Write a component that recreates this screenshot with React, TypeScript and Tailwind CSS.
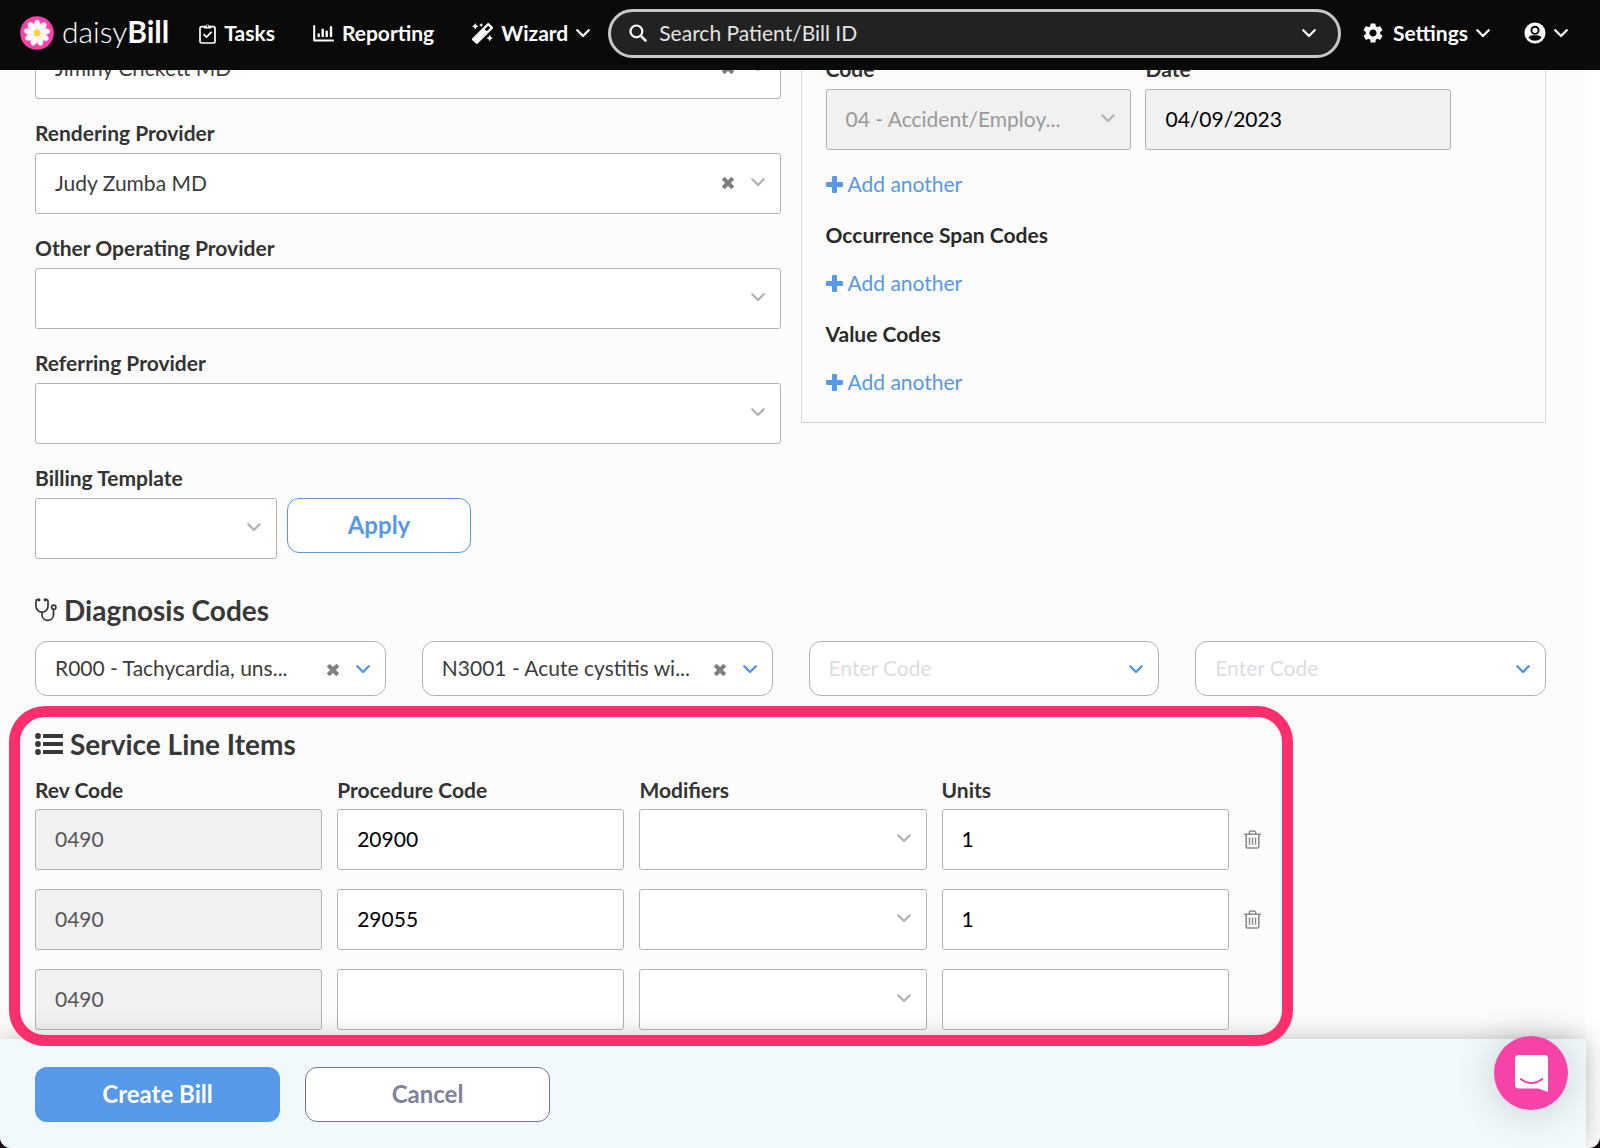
import { useId } from "react";
import type { ReactNode } from "react";
import { clsx } from "clsx";
import { FaMagic } from "react-icons/fa";
import { MdSettings } from "react-icons/md";

const providers = [
  { label: "Rendering Provider", value: "Judy Zumba MD" },
  { label: "Other Operating Provider", value: "" },
  { label: "Referring Provider", value: "" },
];

const diagnosisCodes = [
  "R000 - Tachycardia, uns...",
  "N3001 - Acute cystitis wi...",
  "",
  "",
];

const lineItems = [
  { rev: "0490", procedure: "20900", units: "1", removable: true },
  { rev: "0490", procedure: "29055", units: "1", removable: true },
  { rev: "0490", procedure: "", units: "", removable: false },
];

function Chevron({ className }: { className?: string }) {
  return (
    <svg viewBox="0 0 14 9" fill="none" className={clsx("w-3.5", className)}>
      <path
        d="M1.3 1.3 7 7l5.7-5.7"
        stroke="currentColor"
        strokeWidth="2.3"
        strokeLinecap="round"
        strokeLinejoin="round"
      />
    </svg>
  );
}

function DaisyLogo() {
  return (
    <svg viewBox="0 0 34 34" className="size-[34px]">
      <circle cx="17" cy="17" r="16.8" fill="#f743a8" />
      {[0, 40, 80, 120, 160, 200, 240, 280, 320].map((angle) => (
        <path
          key={angle}
          d="M17 17C13 13 12.8 5 17 3.8c4.6.6 3.8 9.2 0 13.2Z"
          fill="#fff"
          stroke="#fbc3e2"
          strokeWidth="0.5"
          transform={`rotate(${angle} 17 17)`}
        />
      ))}
      <circle cx="17" cy="17" r="3.2" fill="#ffd21f" />
    </svg>
  );
}

function ClipboardIcon() {
  return (
    <svg viewBox="0 0 17 21" fill="none" className="w-[17px]">
      <rect x="1" y="3.6" width="15" height="16.4" rx="1.8" stroke="currentColor" strokeWidth="1.7" />
      <path d="M4.8 5.6V3.5h1.7a2 2 0 0 1 4 0h1.7v2.1Z" fill="currentColor" />
      <circle cx="8.5" cy="3" r="0.9" fill="#0a0a0a" />
      <path d="m5 11.6 2.5 2.5 4.6-4.7" stroke="currentColor" strokeWidth="1.7" strokeLinecap="round" />
    </svg>
  );
}

function ChartIcon() {
  return (
    <svg viewBox="0 0 21 17" fill="none" className="w-[21px]">
      <path d="M1.2 1v14.5H20" stroke="currentColor" strokeWidth="2" strokeLinecap="round" strokeLinejoin="round" />
      <path
        d="M5.7 9.4v1.6M9.7 4.8V11M13.7 6.6V11M18 2.2V11"
        stroke="currentColor"
        strokeWidth="2.4"
        strokeLinecap="round"
      />
    </svg>
  );
}

function SearchIcon() {
  return (
    <svg viewBox="0 0 18 18" fill="none" className="w-[18px]">
      <circle cx="7.4" cy="7.4" r="5.9" stroke="currentColor" strokeWidth="2.2" />
      <path d="m11.8 11.8 4.7 4.7" stroke="currentColor" strokeWidth="2.6" strokeLinecap="round" />
    </svg>
  );
}

function UserIcon() {
  return (
    <svg viewBox="0 0 22 22" className="w-[22px]">
      <circle cx="11" cy="11" r="10.5" fill="#fff" />
      <circle cx="11" cy="8.3" r="3.6" fill="#fff" stroke="#0a0a0a" strokeWidth="1.9" />
      <path
        d="M4.4 15.2c1.5-1.7 3.3-1.9 6.6-1.9s5.1.2 6.600 1.900c-1.500 2.300-3.800 3.600-6.600 3.600s-5.100-1.300-6.600-3.600Z"
        fill="#0a0a0a"
      />
    </svg>
  );
}

function StethoscopeIcon() {
  return (
    <svg viewBox="0 0 22 24" fill="none" className="w-[22px]">
      <path
        d="M4 1.6H2.5C1.5 1.6 1 2.2 1 3.2V8c0 3.4 2.6 6.2 6 6.2S13 11.4 13 8V3.2c0-1-.5-1.6-1.5-1.6H10"
        stroke="currentColor"
        strokeWidth="1.7"
      />
      <path d="M7 14.2v2.3c0 3.4 2.3 5.9 5.7 5.9s5.8-2.5 5.8-5.900v-5" stroke="currentColor" strokeWidth="1.7" />
      <circle cx="18.8" cy="9.3" r="2.1" stroke="currentColor" strokeWidth="1.7" />
      <circle cx="3.9" cy="1.8" r="1.6" fill="currentColor" />
      <circle cx="10.2" cy="1.8" r="1.6" fill="currentColor" />
    </svg>
  );
}

function ListIcon() {
  return (
    <svg viewBox="0 0 28 22" fill="currentColor" className="w-7">
      {[3, 11, 19].map((y) => (
        <g key={y}>
          <circle cx="3" cy={y} r="2.9" />
          <rect x="8" y={y - 2} width="20" height="4" rx="0.6" />
        </g>
      ))}
    </svg>
  );
}

function PlusIcon({ className }: { className?: string }) {
  return (
    <svg viewBox="0 0 17 17" fill="currentColor" className={className}>
      <path d="M7 0h3a1 1 0 0 1 1 1v5h5a1 1 0 0 1 1 1v3a1 1 0 0 1-1 1h-5v5a1 1 0 0 1-1 1H7a1 1 0 0 1-1-1v-5H1a1 1 0 0 1-1-1V7a1 1 0 0 1 1-1h5V1a1 1 0 0 1 1-1Z" />
    </svg>
  );
}

function TrashIcon() {
  return (
    <svg viewBox="0 0 17 19" fill="none" stroke="currentColor" className="w-[17px]">
      <path d="M0 4.2h17" strokeWidth="1.5" />
      <path d="M5.3 4V2.6C5.3 1.5 6 .9 7 .9h3c1 0 1.7.6 1.7 1.7V4" strokeWidth="1.5" />
      <path d="M2.2 4.2v12.4c0 .9.5 1.4 1.4 1.4h9.8c.9 0 1.4-.5 1.4-1.4V4.2" strokeWidth="1.6" />
      <path d="M5.5 7.5v7.3M8.5 7.5v7.3M11.5 7.5v7.3" strokeWidth="1.4" />
    </svg>
  );
}

function NavButton({ icon, label, menu }: { icon: ReactNode; label: string; menu?: boolean }) {
  return (
    <button type="button" className="flex shrink-0 items-center gap-2 text-[21px] font-bold text-white">
      {icon}
      {label}
      {menu && <Chevron />}
    </button>
  );
}

function SelectBox({
  id,
  name,
  value = "",
  placeholder = "",
  disabled,
  rounded,
  clearable,
}: {
  id?: string;
  name?: string;
  value?: string;
  placeholder?: string;
  disabled?: boolean;
  rounded?: boolean;
  clearable?: boolean;
}) {
  return (
    <div className="relative">
      <select
        id={id}
        aria-label={name}
        defaultValue={value}
        disabled={disabled}
        className={clsx(
          "block w-full appearance-none border border-[#b3b3b3] pr-10 pb-0.5 pl-[19px] text-[21px] opacity-100",
          rounded ? "h-[55px] rounded-xl" : "h-[61px] rounded-[3px]",
          disabled ? "bg-[#f1f1f1] text-[#999]" : "bg-white",
          !disabled && (value ? "text-[#3c3c3c]" : "text-[#dcdce4]")
        )}
      >
        <option value={value}>{value || placeholder}</option>
      </select>
      <div
        className={clsx(
          "pointer-events-none absolute inset-y-0 right-4 flex items-center gap-4",
          rounded ? "pt-0.5" : "pb-0.5"
        )}
      >
        {clearable && (
          <button type="button" aria-label="Clear" className="pointer-events-auto text-[#808080]">
            <PlusIcon className="size-3.5 rotate-45" />
          </button>
        )}
        <Chevron className={rounded ? "text-[#4a94ec]" : "text-[#b3b3b3]"} />
      </div>
    </div>
  );
}

function Field({ label, children }: { label: string; children: (id: string) => ReactNode }) {
  const id = useId();
  return (
    <div>
      <label htmlFor={id} className="mb-2 block text-[21px] leading-6 font-bold text-[#333]">
        {label}
      </label>
      {children(id)}
    </div>
  );
}

function TextBox({
  id,
  name,
  value,
  tone = "plain",
}: {
  id?: string;
  name?: string;
  value: string;
  tone?: "plain" | "locked" | "muted";
}) {
  return (
    <input
      id={id}
      aria-label={name}
      type="text"
      defaultValue={value}
      readOnly={tone !== "plain"}
      className={clsx(
        "block h-[61px] w-full rounded-[3px] border border-[#b3b3b3] px-[19px] pb-0.5 text-[21px]",
        tone === "plain" ? "bg-white" : "bg-[#f1f1f1]",
        tone === "muted" ? "text-[#555]" : "text-black"
      )}
    />
  );
}

function AddAnother() {
  return (
    <button type="button" className="flex items-center gap-[5px] text-[21px] leading-6 text-[#5599e8]">
      <PlusIcon className="size-[17px]" />
      Add another
    </button>
  );
}

function Header() {
  return (
    <header className="relative z-10 flex h-[70px] items-center bg-[#0a0a0a] pr-8 pb-1 pl-5 text-white">
      <a href="#home" className="mr-[30px] flex items-center gap-2 text-[30px] leading-none">
        <DaisyLogo />
        <span className="pb-1 font-light">
          daisy<span className="font-bold">Bill</span>
        </span>
      </a>
      <nav className="mr-[18px] flex items-center gap-[38px]">
        <NavButton icon={<ClipboardIcon />} label="Tasks" />
        <NavButton icon={<ChartIcon />} label="Reporting" />
        <NavButton icon={<FaMagic className="size-[21px]" />} label="Wizard" menu />
      </nav>
      <div className="mr-5 flex h-[49px] flex-1 items-center gap-3 rounded-full border-3 border-[#c8c8c8] bg-[#222] px-[18px]">
        <SearchIcon />
        <input
          type="text"
          aria-label="Search"
          placeholder="Search Patient/Bill ID"
          className="min-w-0 flex-1 bg-transparent text-[21px] text-white placeholder:text-[#e4e4e4]"
        />
        <button type="button" aria-label="Search options" className="pr-1">
          <Chevron />
        </button>
      </div>
      <div className="flex items-center gap-[34px]">
        <NavButton icon={<MdSettings className="size-6" />} label="Settings" menu />
        <button type="button" aria-label="Account" className="flex items-center gap-2">
          <UserIcon />
          <Chevron />
        </button>
      </div>
    </header>
  );
}

function OccurrenceCodes() {
  return (
    <section className="border border-[#d4d4d4] px-6 pt-[18px] pb-7">
      <div className="grid w-[90%] grid-cols-2 gap-3.5">
        <Field label="Code">
          {(id) => <SelectBox id={id} value="04 - Accident/Employ..." disabled />}
        </Field>
        <Field label="Date">{(id) => <TextBox id={id} value="04/09/2023" tone="locked" />}</Field>
      </div>
      <div className="mt-[22px] flex flex-col items-start">
        <AddAnother />
        <h3 className="mt-[27px] mb-6 text-[21px] leading-6 font-bold text-[#2a2a2a]">Occurrence Span Codes</h3>
        <AddAnother />
        <h3 className="mt-[27px] mb-6 text-[21px] leading-6 font-bold text-[#2a2a2a]">Value Codes</h3>
        <AddAnother />
      </div>
    </section>
  );
}

function ServiceLineItems() {
  return (
    <section className="relative mt-8">
      {/* highlight frame */}
      <div className="pointer-events-none absolute -top-[22px] -bottom-4 -left-[26px] z-20 w-[85%] rounded-[36px] border-11 border-[#ff2e6c]" />
      <h2 className="flex items-center gap-[7px] text-[28px] leading-8 font-bold text-[#383838]">
        <ListIcon />
        Service Line Items
      </h2>
      <table className="mt-[18px] w-full table-fixed">
        <thead>
          <tr className="text-left text-[21px] leading-6 text-[#333]">
            {["Rev Code", "Procedure Code", "Modifiers", "Units"].map((heading) => (
              <th key={heading} scope="col" className="w-1/5 pb-[7px] font-bold">
                {heading}
              </th>
            ))}
            <th className="w-1/5" />
          </tr>
        </thead>
        <tbody>
          {lineItems.map((item, i) => (
            <tr key={i} className="group">
              <td className="pr-[15px] pb-[19px] group-last:pb-0">
                <TextBox name="Rev Code" value={item.rev} tone="muted" />
              </td>
              <td className="pr-[15px] pb-[19px] group-last:pb-0">
                <TextBox name="Procedure Code" value={item.procedure} />
              </td>
              <td className="pr-[15px] pb-[19px] group-last:pb-0">
                <SelectBox name="Modifiers" />
              </td>
              <td className="pr-[15px] pb-[19px] group-last:pb-0">
                <TextBox name="Units" value={item.units} />
              </td>
              <td className="pb-[19px] group-last:pb-0">
                {item.removable && (
                  <button type="button" aria-label="Delete line" className="block text-[#8c8c8c]">
                    <TrashIcon />
                  </button>
                )}
              </td>
            </tr>
          ))}
        </tbody>
      </table>
    </section>
  );
}

export default function App() {
  return (
    <div className="min-h-screen bg-[#14000c] font-['Lato',sans-serif]">
      <div className="flex min-h-screen flex-col overflow-hidden rounded-b-[11px] bg-white">
        <Header />
        <main className="mr-[15px] flex-1 bg-[#fcfcfc] pr-[39px] pb-2 pl-[35px]">
          <div className="-mt-8 grid grid-cols-2 items-start gap-5">
            <div className="flex flex-col gap-[22px]">
              <SelectBox name="Billing Provider" value="Jiminy Crickett MD" clearable />
              {providers.map((provider) => (
                <Field key={provider.label} label={provider.label}>
                  {(id) => <SelectBox id={id} value={provider.value} clearable={provider.value !== ""} />}
                </Field>
              ))}
              <div className="flex items-end gap-2.5">
                <div className="w-[242px]">
                  <Field label="Billing Template">{(id) => <SelectBox id={id} />}</Field>
                </div>
                <button
                  type="button"
                  className="mb-1.5 h-[55px] w-[184px] rounded-xl border border-[#5599e8] bg-white pb-0.5 text-2xl font-bold text-[#5599e8]"
                >
                  Apply
                </button>
              </div>
            </div>
            <OccurrenceCodes />
          </div>

          <section className="mt-[35px]">
            <h2 className="flex items-center gap-[7px] text-[28px] leading-8 font-bold text-[#383838]">
              <StethoscopeIcon />
              Diagnosis Codes
            </h2>
            <div className="mt-[15px] grid grid-cols-4 gap-9">
              {diagnosisCodes.map((code, i) => (
                <SelectBox
                  key={i}
                  name={`Diagnosis code ${i + 1}`}
                  value={code}
                  placeholder="Enter Code"
                  rounded
                  clearable={code !== ""}
                />
              ))}
            </div>
          </section>

          <ServiceLineItems />
        </main>

        <footer className="relative z-10 mr-3.5 flex h-[109px] items-center gap-[25px] bg-[#f2f9fd] pt-0.5 pl-[35px] shadow-[0_0_24px_rgba(0,0,0,0.25)]">
          <button type="button" className="h-[55px] w-[245px] rounded-xl bg-[#5599e8] pb-0.5 text-2xl font-bold text-white">
            Create Bill
          </button>
          <button
            type="button"
            className="h-[55px] w-[245px] rounded-xl border border-[#74758c] bg-white pb-0.5 text-2xl font-bold text-[#80829a]"
          >
            Cancel
          </button>
        </footer>
      </div>

      <button
        type="button"
        aria-label="Open chat"
        className="fixed right-8 bottom-[38px] z-30 flex size-[74px] items-center justify-center rounded-full bg-[#f743a8] shadow-[0_2px_40px_rgba(0,0,0,0.18)]"
      >
        <svg viewBox="0 0 33 37" fill="none" className="w-[33px]">
          <path d="M4 0h25a4 4 0 0 1 4 4v33l-9.5-3.5H4a4 4 0 0 1-4-4V4a4 4 0 0 1 4-4Z" fill="#fff" />
          <path d="M5.8 24c6 5.2 15.4 5.2 21.4 0" stroke="#f743a8" strokeWidth="2" strokeLinecap="round" />
        </svg>
      </button>
    </div>
  );
}
